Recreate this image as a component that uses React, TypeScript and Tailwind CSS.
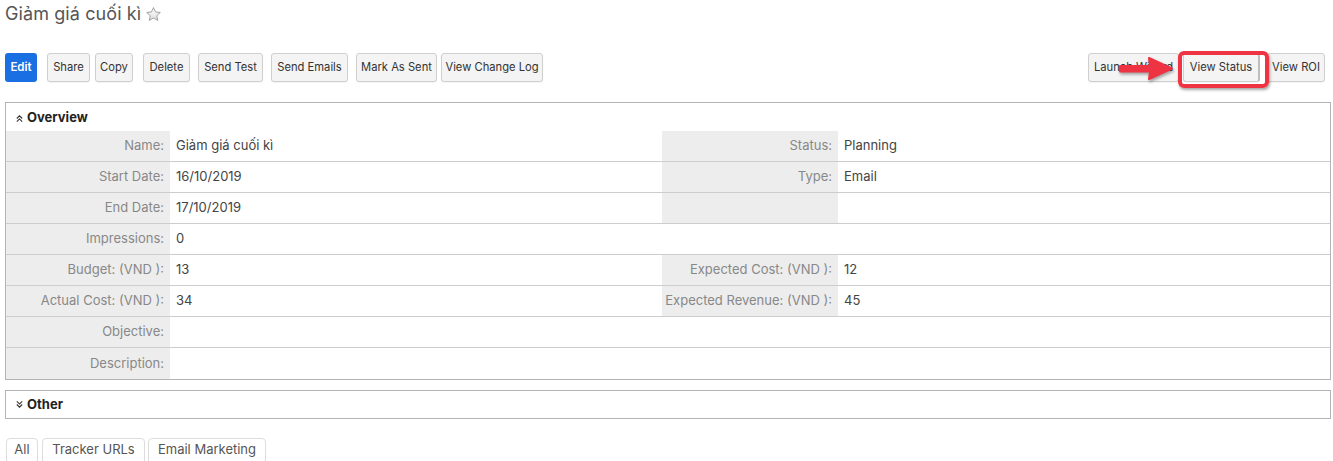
import React from "react";

const btn =
  "h-[29px] rounded-[3px] border border-[#cfcfcf] bg-[#f4f4f4] text-[11.2px] text-[#333] flex items-center justify-center shadow-[0_1px_1px_rgba(0,0,0,0.05)]";

function Star() {
  return (
    <svg width="17" height="17" viewBox="0 0 24 24" className="ml-[4px] mt-[1px]">
      <defs>
        <linearGradient id="sg" x1="0" y1="0" x2="0" y2="1">
          <stop offset="0" stopColor="#ffffff" />
          <stop offset="1" stopColor="#dcdcdc" />
        </linearGradient>
      </defs>
      <path
        d="M12 2.2l2.9 6.2 6.7.7-5 4.6 1.4 6.7L12 17l-6 3.4 1.4-6.7-5-4.6 6.7-.7z"
        fill="url(#sg)"
        stroke="#9a9a9a"
        strokeWidth="1.3"
        strokeLinejoin="round"
      />
    </svg>
  );
}

type Cell = { label?: string; value?: string; gray?: boolean };

const rows: [Cell, Cell][] = [
  [{ label: "Name:", value: "Giảm giá cuối kì", gray: true }, { label: "Status:", value: "Planning", gray: true }],
  [{ label: "Start Date:", value: "16/10/2019", gray: true }, { label: "Type:", value: "Email", gray: true }],
  [{ label: "End Date:", value: "17/10/2019", gray: true }, { label: "", value: "", gray: true }],
  [{ label: "Impressions:", value: "0", gray: true }, { gray: false }],
  [{ label: "Budget: (VND ):", value: "13", gray: true }, { label: "Expected Cost: (VND ):", value: "12", gray: true }],
  [{ label: "Actual Cost: (VND ):", value: "34", gray: true }, { label: "Expected Revenue: (VND ):", value: "45", gray: true }],
  [{ label: "Objective:", value: "", gray: true }, { gray: false }],
  [{ label: "Description:", value: "", gray: true }, { gray: false }],
];

function ChevUp() {
  return (
    <svg width="9" height="9" viewBox="0 0 10 10" className="mr-[3px]">
      <path d="M2 5L5 2l3 3M2 8.5L5 5.5l3 3" fill="none" stroke="#333" strokeWidth="1.2" />
    </svg>
  );
}
function ChevDown() {
  return (
    <svg width="9" height="9" viewBox="0 0 10 10" className="mr-[3px]">
      <path d="M2 1.5L5 4.5l3-3M2 5L5 8l3-3" fill="none" stroke="#333" strokeWidth="1.2" />
    </svg>
  );
}

export default function App() {
  return (
    <div
      className="w-[1333px] h-[461px] overflow-hidden bg-white text-[#333]"
      style={{ fontFamily: "Inter, 'Noto Sans', 'Liberation Sans', sans-serif" }}
    >
      {/* Title */}
      <div className="flex items-center pl-[5px] pt-[1px] h-[26px]">
        <span className="text-[18px] text-[#555] tracking-[0.1px]">Giảm giá cuối kì</span>
        <Star />
      </div>

      {/* Buttons */}
      <div className="flex items-center mt-[27px] pl-[5px] pr-[8px] h-[29px]">
        <div className="h-[29px] w-[32px] rounded-[3px] bg-[#1a6fe3] text-white text-[11.5px] font-semibold flex items-center justify-center">
          Edit
        </div>
        <div className={btn + " ml-[10px] w-[43px]"}>Share</div>
        <div className={btn + " ml-[5px] w-[38px]"}>Copy</div>
        <div className={btn + " ml-[10px] w-[47px]"}>Delete</div>
        <div className={btn + " ml-[8px] w-[65px]"}>Send Test</div>
        <div className={btn + " ml-[8px] w-[77px]"}>Send Emails</div>
        <div className={btn + " ml-[8px] w-[81px]"}>Mark As Sent</div>
        <div className={btn + " ml-[4px] w-[102px]"}>View Change Log</div>
        <div className="flex-1" />
        <div className="relative flex items-center">
          <div className={btn + " w-[91px]"}>Launch Wizard</div>
          <div className={btn + " ml-[4px] w-[77px] border-r-[2px] border-r-[#bdbdbd]"}>View Status</div>
          <div className={btn + " ml-[7px] w-[58px]"}>View ROI</div>
          {/* red box */}
          <div className="absolute left-[90px] top-[-2px] w-[91px] h-[37px] rounded-[6px] border-[4px] border-[#ee3442] shadow-[1px_2px_3px_rgba(0,0,0,0.35)]" />
          {/* arrow */}
          <svg
            className="absolute left-[29px] top-[3px]"
            width="60"
            height="26"
            viewBox="0 0 60 26"
            style={{ filter: "drop-shadow(1px 2px 1.5px rgba(0,0,0,0.35))" }}
          >
            <path
              d="M3 10 L33 10 L32 2 L55 12.5 L32 23 L33 15.5 L3 15.5 Z"
              fill="#ee3442"
              strokeLinejoin="round"
              stroke="#ee3442"
              strokeWidth="2"
            />
          </svg>
        </div>
      </div>

      {/* Overview panel */}
      <div className="mx-[5px] mt-[20px] w-[1326px] border border-[#b4b4b4]">
        <div className="h-[28px] flex items-center pl-[9px] pt-[2px] text-[13px] font-bold text-[#222]">
          <ChevUp />
          Overview
        </div>
        {rows.map((r, i) => (
          <div
            key={i}
            className={
              "flex h-[31px] text-[13px] " + (i < rows.length - 1 ? "border-b border-[#cdcdcd]" : "")
            }
          >
            <div className="w-[164px] bg-[#ededed] flex items-center justify-end pr-[6px] text-[#888]">
              {r[0].label}
            </div>
            <div className="w-[492px] flex items-center pl-[6px] text-[#444]">{r[0].value}</div>
            {r[1].gray ? (
              <>
                <div className="w-[176px] bg-[#ededed] flex items-center justify-end pr-[6px] text-[#888]">
                  {r[1].label}
                </div>
                <div className="flex-1 flex items-center pl-[6px] text-[#444]">{r[1].value}</div>
              </>
            ) : (
              <div className="flex-1" />
            )}
          </div>
        ))}
      </div>

      {/* Other panel */}
      <div className="mx-[5px] mt-[10px] w-[1326px] h-[29px] border border-[#b4b4b4] flex items-center pl-[9px] text-[13px] font-bold text-[#222]">
        <ChevDown />
        Other
      </div>

      {/* Tabs */}
      <div className="flex mt-[19px] pl-[6px] text-[13px] text-[#555]">
        <div className="h-[28px] w-[32px] border border-[#ddd] rounded-t-[4px] flex justify-center pt-[1px]">All</div>
        <div className="h-[28px] ml-[4px] w-[103px] border border-[#ddd] rounded-t-[4px] flex justify-center pt-[1px]">
          Tracker URLs
        </div>
        <div className="h-[28px] ml-[3px] w-[118px] border border-[#ddd] rounded-t-[4px] flex justify-center pt-[1px]">
          Email Marketing
        </div>
      </div>
    </div>
  );
}
